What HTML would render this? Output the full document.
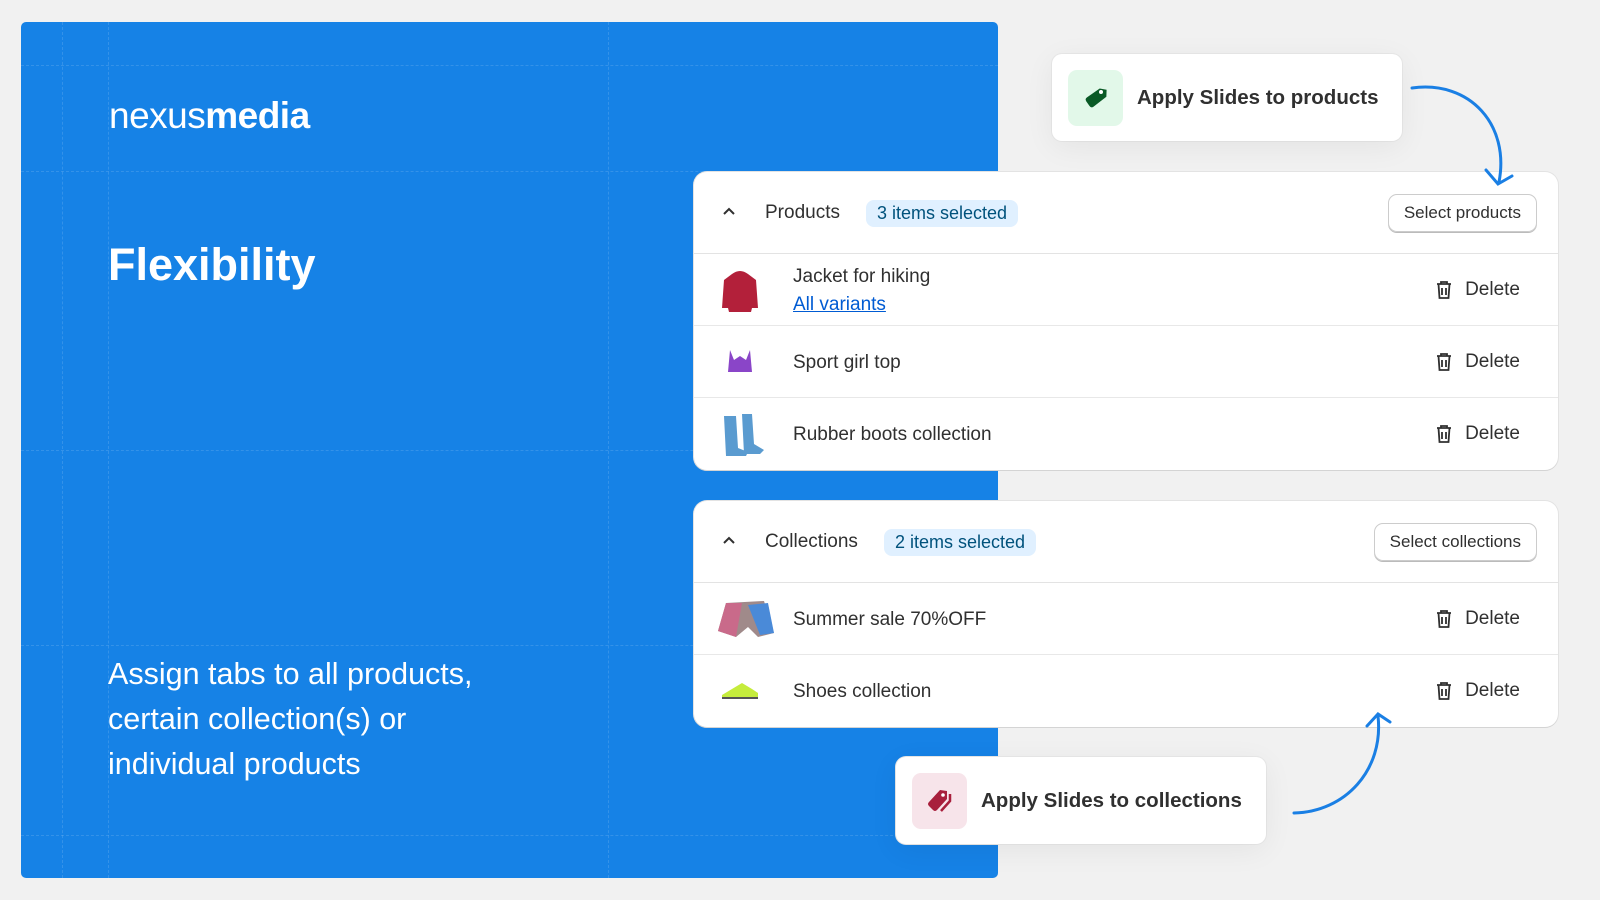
<!DOCTYPE html>
<html><head><meta charset="utf-8"><style>
*{margin:0;padding:0;box-sizing:border-box}
body{width:1600px;height:900px;background:#f1f1f1;font-family:"Liberation Sans",sans-serif;position:relative;overflow:hidden;color:#303030}
.blue{position:absolute;left:21px;top:22px;width:977px;height:856px;background:#1682e6;border-radius:5px;overflow:hidden}
.vl{position:absolute;top:0;bottom:0;border-left:1px dashed rgba(255,255,255,.13)}
.hl{position:absolute;left:0;right:0;border-top:1px dashed rgba(255,255,255,.13)}
.logo{position:absolute;left:109px;top:95px;color:#fff;font-size:37px;letter-spacing:-0.5px}
.logo b{font-weight:700}
.h1{position:absolute;left:108px;top:239px;color:#fff;font-size:45px;font-weight:700}
.p{position:absolute;left:108px;top:652px;color:#fff;font-size:30.5px;line-height:45px}
.card{position:absolute;background:#fff;border-radius:13px;box-shadow:0 1px 0 #d4d4d4,0 0 0 1px #e3e3e3}
.tag{position:absolute;background:#fff;border-radius:10px;box-shadow:0 6px 30px rgba(0,0,0,.06),0 0 0 1px #e8e8e8;display:flex;align-items:center}
.tag .ic{width:55px;height:56px;border-radius:9px;margin-left:16px;margin-right:14px;display:flex;align-items:center;justify-content:center}
.tag span{font-weight:700;font-size:20.5px;color:#303030}
.hdr{position:absolute;left:0;right:0;top:0;border-bottom:1px solid #e3e3e3}
.row{position:absolute;left:0;right:0;border-bottom:1px solid #e8e8e8}
.row:last-child{border-bottom:none}
.t{position:absolute;left:99px;font-size:19px;color:#303030}
.del{position:absolute;right:38px;font-size:19px;display:flex;align-items:center;gap:12px}
.badge{position:absolute;background:#e0f0ff;color:#00527c;font-size:18px;border-radius:8px;height:27px;line-height:27px;padding:0 11px}
.btn{position:absolute;right:21px;border:1px solid #ccc;box-shadow:0 1px 0 #bbb;border-radius:9px;height:38px;line-height:36px;padding:0 15px;font-size:17px;color:#303030}
.img{position:absolute;left:24px}
</style></head><body>
<div class="blue">
<div class="vl" style="left:41px"></div><div class="vl" style="left:87px"></div><div class="vl" style="left:587px"></div>
<div class="hl" style="top:43px"></div><div class="hl" style="top:149px"></div><div class="hl" style="top:428px"></div><div class="hl" style="top:623px"></div><div class="hl" style="top:813px"></div>
</div>
<div class="logo">nexus<b>media</b></div>
<div class="h1">Flexibility</div>
<div class="p">Assign tabs to all products,<br>certain collection(s) or<br>individual products</div>

<div class="tag" style="left:1052px;top:54px;width:350px;height:87px">
<div class="ic" style="background:#e2f8e9"><svg width="24" height="24" viewBox="0 0 24 24"><path d="M14 2 L21 2 L22 9 L11 21 Q9 23 7 21 L3 17 Q1 15 3 13 Z" fill="#0a5a26" transform="rotate(10 12 12)"/><circle cx="17" cy="6" r="2" fill="#fff"/></svg></div>
<span>Apply Slides to products</span></div>

<div class="card" style="left:694px;top:172px;width:864px;height:298px">
<div class="hdr" style="height:82px">
<svg style="position:absolute;left:28px;top:34px" width="14" height="10"><path d="M2 8 L7 3 L12 8" fill="none" stroke="#303030" stroke-width="2"/></svg>
<div class="t" style="left:71px;top:30px">Products</div>
<div class="badge" style="left:172px;top:28px">3 items selected</div>
<div class="btn" style="top:22px">Select products</div></div>
<div class="row" style="top:82px;height:72px">
<svg class="img" style="top:14px" width="44" height="46"><path d="M14 6 Q22 0 30 6 L38 12 L40 40 L34 40 L33 44 L11 44 L10 40 L4 40 L6 12 Z" fill="#b3203a"/></svg>
<div class="t" style="top:12px">Jacket for hiking</div>
<div class="t" style="top:40px;color:#005bd3;text-decoration:underline">All variants</div>
<div class="del" style="top:25px"><svg width="18" height="20" viewBox="0 0 18 20"><path d="M2 4 H16 M6 4 V2 H12 V4 M3.5 4 L4.5 18 H13.5 L14.5 4 M7 8 V15 M11 8 V15" fill="none" stroke="#303030" stroke-width="1.8"/></svg>Delete</div></div>
<div class="row" style="top:154px;height:72px">
<svg class="img" style="top:20px" width="44" height="34"><path d="M12 4 L16 14 L22 10 L28 14 L32 4 L34 26 L10 26 Z" fill="#8a45c8"/></svg>
<div class="t" style="top:26px">Sport girl top</div>
<div class="del" style="top:25px"><svg width="18" height="20" viewBox="0 0 18 20"><path d="M2 4 H16 M6 4 V2 H12 V4 M3.5 4 L4.5 18 H13.5 L14.5 4 M7 8 V15 M11 8 V15" fill="none" stroke="#303030" stroke-width="1.8"/></svg>Delete</div></div>
<div class="row" style="top:226px;height:72px">
<svg class="img" style="top:14px" width="48" height="46"><path d="M6 4 H18 L20 36 L30 40 L28 44 H8 Z M24 2 H34 L36 32 L46 38 L42 42 H26 Z" fill="#5a9bd0"/></svg>
<div class="t" style="top:26px">Rubber boots collection</div>
<div class="del" style="top:25px"><svg width="18" height="20" viewBox="0 0 18 20"><path d="M2 4 H16 M6 4 V2 H12 V4 M3.5 4 L4.5 18 H13.5 L14.5 4 M7 8 V15 M11 8 V15" fill="none" stroke="#303030" stroke-width="1.8"/></svg>Delete</div></div>
</div>

<div class="card" style="left:694px;top:501px;width:864px;height:226px">
<div class="hdr" style="height:82px">
<svg style="position:absolute;left:28px;top:34px" width="14" height="10"><path d="M2 8 L7 3 L12 8" fill="none" stroke="#303030" stroke-width="2"/></svg>
<div class="t" style="left:71px;top:30px">Collections</div>
<div class="badge" style="left:190px;top:28px">2 items selected</div>
<div class="btn" style="top:22px">Select collections</div></div>
<div class="row" style="top:82px;height:72px">
<svg class="img" style="top:16px" width="58" height="42"><path d="M8 4 L46 2 L56 34 L40 38 L30 28 L18 38 L0 32 Z" fill="#a08a8a"/><path d="M30 6 L50 4 L56 34 L42 36 Z" fill="#4a8ad8"/><path d="M8 4 L24 4 L18 38 L0 32Z" fill="#c96a8a"/></svg>
<div class="t" style="top:26px">Summer sale 70%OFF</div>
<div class="del" style="top:25px"><svg width="18" height="20" viewBox="0 0 18 20"><path d="M2 4 H16 M6 4 V2 H12 V4 M3.5 4 L4.5 18 H13.5 L14.5 4 M7 8 V15 M11 8 V15" fill="none" stroke="#303030" stroke-width="1.8"/></svg>Delete</div></div>
<div class="row" style="top:154px;height:72px">
<svg class="img" style="top:26px" width="44" height="20"><path d="M4 14 Q14 8 24 2 L34 8 L40 12 L40 18 L4 18 Z" fill="#c5ec3c"/><path d="M4 17 H40" stroke="#555" stroke-width="2"/></svg>
<div class="t" style="top:26px">Shoes collection</div>
<div class="del" style="top:25px"><svg width="18" height="20" viewBox="0 0 18 20"><path d="M2 4 H16 M6 4 V2 H12 V4 M3.5 4 L4.5 18 H13.5 L14.5 4 M7 8 V15 M11 8 V15" fill="none" stroke="#303030" stroke-width="1.8"/></svg>Delete</div></div>
</div>

<div class="tag" style="left:896px;top:757px;width:370px;height:87px">
<div class="ic" style="background:#f7e4ea"><svg width="28" height="28" viewBox="0 0 28 28"><path d="M14 3 L21 4 L21 12 L11 23 Q9 25 7 23 L3 19 Q1 17 3 15 Z" fill="#a81f3c"/><circle cx="17" cy="8" r="1.8" fill="#fff"/><path d="M24 7 V14 L15 24" fill="none" stroke="#a81f3c" stroke-width="2.5"/></svg></div>
<span>Apply Slides to collections</span></div>

<svg style="position:absolute;left:0;top:0;z-index:5" width="1600" height="900"><g fill="none" stroke="#1a7fe4" stroke-width="3" stroke-linecap="round">
<path d="M1412 88 C1470 80 1510 125 1499 182"/><path d="M1486 170 L1498 184 L1512 176"/>
<path d="M1294 813 C1345 812 1384 770 1378 716"/><path d="M1367 726 L1378 714 L1390 722"/></g></svg>
</body></html>
